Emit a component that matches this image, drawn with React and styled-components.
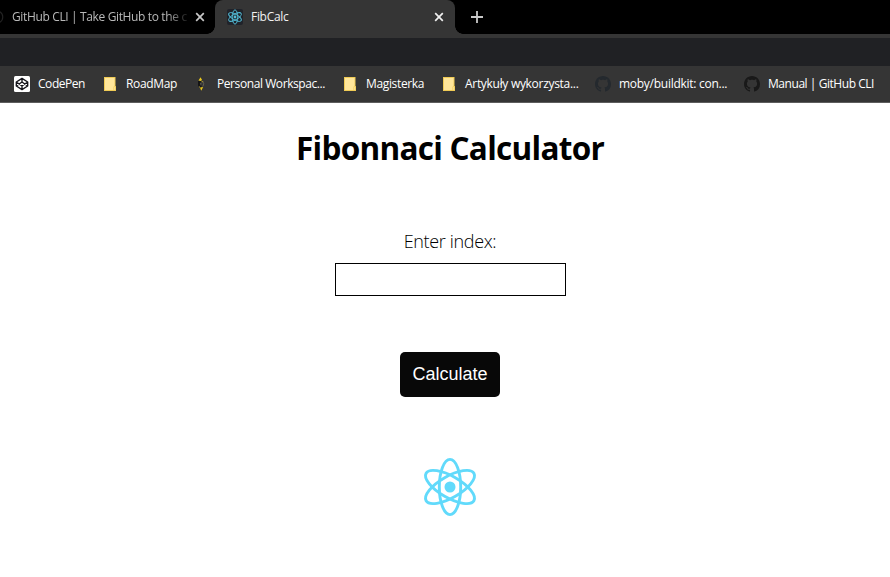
import React from "react";
import styled, { createGlobalStyle } from "styled-components";

const GlobalStyle = createGlobalStyle`
  * { box-sizing: border-box; }
  html, body { margin: 0; padding: 0; background: #fff; overflow: hidden; }
`;

const Window = styled.div`
  width: 890px;
  height: 577px;
  display: flex;
  flex-direction: column;
  background: #fff;
  font-family: "Segoe UI", "Open Sans", "Noto Sans", sans-serif;
`;

const TabStrip = styled.div`
  display: flex;
  height: 34px;
  background: #000;
`;

const Tab = styled.div`
  display: flex;
  align-items: center;
  height: 34px;
  width: ${(p) => p.$width}px;
  padding-left: ${(p) => p.$inset}px;
  background: ${(p) => (p.$active ? "#353535" : "#000")};
  border-radius: ${(p) => (p.$active ? "8px 8px 0 0" : "0")};
  color: ${(p) => (p.$active ? "#f2f2f2" : "#b9b9b9")};
`;

const TabFoot = styled.div`
  width: 8px;
  height: 8px;
  flex: none;
  align-self: flex-end;
  margin-left: ${(p) => (p.$side === "left" ? "-8px" : "0")};
  background: radial-gradient(
    circle at ${(p) => (p.$side === "left" ? "0 0" : "100% 0")},
    transparent 7.5px,
    #353535 8px
  );
`;

const Label = styled.span`
  flex: none;
  width: ${(p) => p.$width}px;
  white-space: nowrap;
  font-size: 12px;
  font-weight: 450;
  line-height: 18px;
  letter-spacing: ${(p) => p.$track || 0}px;
`;

const FadingLabel = styled(Label)`
  mask-image: linear-gradient(to right, #000 155px, transparent 178px);
`;

const Clip = styled.div`
  width: 12px;
  height: 16px;
  overflow: hidden;
  display: flex;
  justify-content: flex-end;
`;

const CloseIcon = styled.svg`
  flex: none;
  width: 10px;
  height: 10px;
  margin-left: ${(p) => p.$gap}px;
`;

const NewTab = styled.svg`
  width: 12px;
  height: 12px;
  margin: 11px 0 0 8px;
`;

const Favicon = styled.div`
  width: 16px;
  height: 16px;
  flex: none;
  margin-right: 8px;
  display: flex;
  background: #20232a;
  border-radius: 2px;
`;

const AddressBar = styled.div`
  height: 32px;
  border-top: 4px solid #353535;
  background: #202124;
`;

const BookmarkBar = styled.nav`
  display: flex;
  align-items: center;
  height: 37px;
  padding-left: 14px;
  gap: 16px;
  background: #353535;
  border-bottom: 1px solid #5d5d5d;
`;

const Bookmark = styled.div`
  display: flex;
  align-items: center;
  flex: none;
  gap: 8px;
  color: #fff;
`;

const Icon = styled.svg`
  display: block;
  flex: none;
  width: 16px;
  height: 16px;
`;

const Main = styled.main`
  display: flex;
  flex-direction: column;
  align-items: center;
  flex: 1;
  padding-left: 10px;
  color: #000;
`;

const Title = styled.h1`
  margin: 23px 0 0;
  font-size: 31.5px;
  line-height: 44px;
  font-weight: 700;
  letter-spacing: -0.72px;
  white-space: nowrap;
`;

const FieldLabel = styled.label`
  margin-top: 59px;
  font-size: 18px;
  line-height: 24px;
  font-weight: 300;
  letter-spacing: -0.35px;
  white-space: nowrap;
`;

const Field = styled.input`
  margin: 10px 0 0;
  width: 231px;
  height: 33px;
  padding: 0 8px;
  border: 1px solid #000;
  border-radius: 0;
  background: #fff;
  outline: none;
`;

const Calculate = styled.button`
  margin: 56px 0 0;
  width: 100px;
  height: 45px;
  padding: 0;
  border: 0;
  border-radius: 5px;
  background: #080808;
  color: #fff;
  font: 18px "Liberation Sans", Arial, sans-serif;
`;

const Logo = styled.svg`
  display: block;
  width: 60px;
  height: 60px;
  margin-top: 60px;
`;

function Atom({ stroke, color }) {
  return (
    <g fill="none" stroke={color} strokeWidth={stroke}>
      <ellipse rx="10.7" ry="27.6" />
      <ellipse rx="10.7" ry="27.6" transform="rotate(60)" />
      <ellipse rx="10.7" ry="27.6" transform="rotate(120)" />
      <circle r="5.5" fill={color} stroke="none" />
    </g>
  );
}

function Close({ gap, color }) {
  return (
    <CloseIcon $gap={gap} viewBox="0 0 10 10">
      <path d="M1.2 1.2 8.8 8.8M8.8 1.2 1.2 8.8" stroke={color} strokeWidth="1.7" />
    </CloseIcon>
  );
}

function CodePenIcon() {
  return (
    <Icon viewBox="0 0 16 16">
      <rect width="16" height="16" rx="1.5" fill="#fff" />
      <path
        d="M8 2.4 13.7 6v4L8 13.6 2.3 10V6ZM8 2.4V6M8 10v3.6M2.3 6 8 10l5.7-4M2.3 10 8 6l5.7 4"
        fill="none"
        stroke="#15151b"
        strokeWidth="1.35"
        strokeLinejoin="round"
      />
    </Icon>
  );
}

function FolderIcon() {
  return (
    <Icon viewBox="0 0 16 16">
      <path d="M2 1h11.5v9H14v5H2Z" fill="#f0cb55" />
      <path d="M3 2h9.5v8.5h-1V14H3Z" fill="#ffe69a" />
      <path d="M12.2 11h1v3h-1Z" fill="#ffe69a" />
    </Icon>
  );
}

function WorkspaceIcon() {
  return (
    <Icon viewBox="0 0 16 16">
      <path d="M5 5h3v1.5H7v3h1.5V12H7L5 9.5Z" fill="#151515" />
      <path d="M9.8 5q2 3 0 5.5" fill="none" stroke="#6c6a58" strokeWidth="0.8" />
      <path d="M7.5 1.2 9 3.8 8 5 5.5 4.5ZM8.2 14.8 7 11.5l3.2-.6Z" fill="#e8c71d" />
      <path d="M8.8 5h1v1.2h-1ZM6 10.6h1v1H6Z" fill="#b59d29" />
      <path d="M7 7h1.5v1.5H7Z" fill="#55564d" />
    </Icon>
  );
}

function GitHubIcon({ color }) {
  return (
    <Icon viewBox="0 0 16 16">
      <path
        fill={color}
        d="M8 0C3.58 0 0 3.58 0 8c0 3.54 2.29 6.53 5.47 7.59.4.07.55-.17.55-.38 0-.19-.01-.82-.01-1.49-2.01.37-2.53-.49-2.69-.94-.09-.23-.48-.94-.82-1.13-.28-.15-.68-.52-.01-.53.63-.01 1.08.58 1.23.82.72 1.21 1.87.87 2.33.66.07-.52.28-.87.51-1.07-1.78-.2-3.64-.89-3.64-3.95 0-.87.31-1.59.82-2.15-.08-.2-.36-1.02.08-2.12 0 0 .67-.21 2.2.82.64-.18 1.32-.27 2-.27s1.36.09 2 .27c1.53-1.04 2.2-.82 2.2-.82.44 1.1.16 1.92.08 2.12.51.56.82 1.27.82 2.15 0 3.07-1.87 3.75-3.65 3.95.29.25.54.73.54 1.48 0 1.07-.01 1.93-.01 2.2 0 .21.15.46.55.38A8.01 8.01 0 0 0 16 8c0-4.42-3.58-8-8-8Z"
      />
    </Icon>
  );
}

const bookmarks = [
  { text: "CodePen", width: 48, track: -0.45, icon: <CodePenIcon /> },
  { text: "RoadMap", width: 51, track: -0.35, icon: <FolderIcon /> },
  { text: "Personal Workspac...", width: 109, track: -0.42, icon: <WorkspaceIcon /> },
  { text: "Magisterka", width: 59, track: -0.35, icon: <FolderIcon /> },
  { text: "Artykuły wykorzysta...", width: 114, track: -0.3, icon: <FolderIcon /> },
  { text: "moby/buildkit: con...", width: 109, track: -0.27, icon: <GitHubIcon color="#24292e" /> },
  { text: "Manual | GitHub CLI", width: 108, track: -0.45, icon: <GitHubIcon color="#191919" /> },
];

export default function App() {
  return (
    <Window>
      <GlobalStyle />
      <TabStrip>
        <Tab $width={215} $inset={0}>
          <Clip>
            <svg width="16" height="16" viewBox="-8 -8 16 16">
              <path d="M-5 -7A8.5 8.5 0 0 1-5 7" transform="translate(-3 0)" fill="none" stroke="#242424" strokeWidth="1.5" />
            </svg>
          </Clip>
          <FadingLabel $width={176} $track={-0.36}>GitHub CLI | Take GitHub to the c</FadingLabel>
          <Close gap={7} color="#c8c8c8" />
        </Tab>
        <TabFoot $side="left" />
        <Tab $active $width={240} $inset={12}>
          <Favicon>
            <Icon viewBox="-31 -31 62 62">
              <Atom stroke="3.6" color="#52bcd6" />
            </Icon>
          </Favicon>
          <Label $width={176} $track={-0.3}>FibCalc</Label>
          <Close gap={7} color="#f0f0f0" />
        </Tab>
        <TabFoot $side="right" />
        <NewTab viewBox="0 0 12 12">
          <path d="M6 0v12M0 6h12" stroke="#c9c9c9" strokeWidth="1.8" />
        </NewTab>
      </TabStrip>
      <AddressBar />
      <BookmarkBar>
        {bookmarks.map((b) => (
          <Bookmark key={b.text}>
            {b.icon}
            <Label $width={b.width} $track={b.track}>{b.text}</Label>
          </Bookmark>
        ))}
      </BookmarkBar>
      <Main>
        <Title>Fibonnaci Calculator</Title>
        <FieldLabel htmlFor="index">Enter index:</FieldLabel>
        <Field id="index" />
        <Calculate>Calculate</Calculate>
        <Logo viewBox="-30 -30 60 60">
          <Atom stroke="2.9" color="#61dafb" />
        </Logo>
      </Main>
    </Window>
  );
}
